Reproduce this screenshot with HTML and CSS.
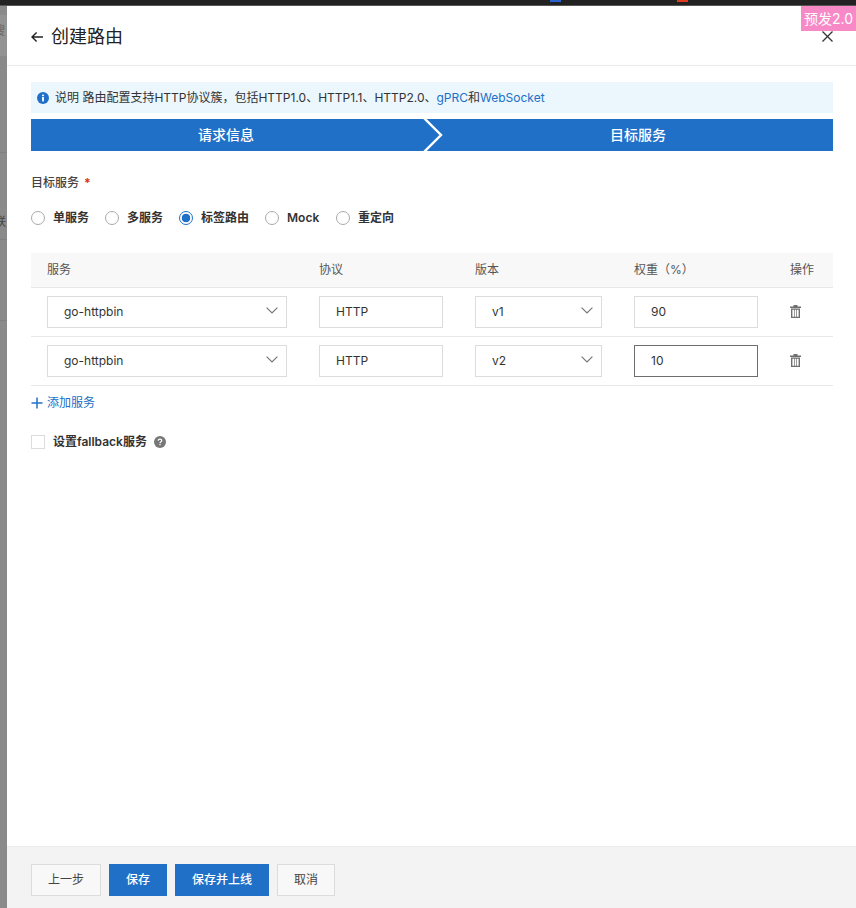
FILE: index.html
```html
<!DOCTYPE html>
<html lang="zh">
<head>
<meta charset="utf-8">
<title>创建路由</title>
<link rel="stylesheet" href="styles.css">
</head>
<body>
<div class="topbar"><span class="tab-blue"></span><span class="tab-red"></span></div>
<div class="stage">
  <aside class="backdrop">
    <span class="band"></span>
    <span class="frag frag-a">搜</span>
    <span class="frag frag-b">联</span>
    <span class="bg-line line-a"></span>
    <span class="bg-line line-b"></span>
    <span class="bg-line line-c"></span>
  </aside>
  <main class="drawer">
    <div class="badge">预发2.0</div>
    <header class="head">
      <div class="head-title">
        <svg class="back" width="12" height="12" viewBox="0 0 12 12"><path d="M5.6 1.400 1 6l4.600 4.600M1 6h11" fill="none" stroke="#222" stroke-width="1.400"/></svg>
        <h1>创建路由</h1>
      </div>
      <svg class="close" width="11" height="11" viewBox="0 0 11 11"><path d="M.5.5l10 10M10.500.5l-10 10" fill="none" stroke="#333" stroke-width="1.300"/></svg>
    </header>
    <div class="body">
      <div class="alert">
        <svg width="12" height="12" viewBox="0 0 12 12"><circle cx="6" cy="6" r="6" fill="#2070c8"/><rect x="5.100" y="5" width="1.800" height="4.400" fill="#fff"/><rect x="5.100" y="2.600" width="1.800" height="1.600" fill="#fff"/></svg>
        <span>说明 路由配置支持HTTP协议簇，包括HTTP1.0、HTTP1.1、HTTP2.0、<a href="#">gPRC</a>和<a href="#">WebSocket</a></span>
      </div>
      <div class="steps">
        <div class="step">请求信息</div>
        <div class="step">目标服务</div>
        <svg class="chevron" width="22" height="32" viewBox="0 0 22 32"><path d="M2 -1 19 16 2 33" fill="none" stroke="#fff" stroke-width="2.400"/></svg>
      </div>
      <div class="label">目标服务<span class="req">*</span></div>
      <div class="radios">
        <label class="radio"><i class="dot"></i>单服务</label>
        <label class="radio"><i class="dot"></i>多服务</label>
        <label class="radio"><i class="dot on"></i>标签路由</label>
        <label class="radio mock"><i class="dot"></i>Mock</label>
        <label class="radio"><i class="dot"></i>重定向</label>
      </div>
      <div class="table">
        <div class="tr th"><div>服务</div><div>协议</div><div>版本</div><div>权重（%）</div><div>操作</div></div>
        <div class="tr">
          <div class="field select">go-httpbin<svg class="caret" width="12" height="7" viewBox="0 0 12 7"><path d="M.6.600 6 6 11.400.600" fill="none" stroke="#777" stroke-width="1.200"/></svg></div>
          <div class="field">HTTP</div>
          <div class="field select">v1<svg class="caret" width="12" height="7" viewBox="0 0 12 7"><path d="M.6.600 6 6 11.400.600" fill="none" stroke="#777" stroke-width="1.200"/></svg></div>
          <div class="field">90</div>
          <svg class="trash" width="11" height="13" viewBox="0 0 11 13"><path d="M3.500 0h4v1.500H11V3H0V1.500h3.500z" fill="#6f6f6f"/><path fill-rule="evenodd" d="M1 3.500h9V13H1zM2.400 4.800v6.900h1.600V4.800zM4.700 4.800v6.900h1.600V4.800zM7 4.800v6.900h1.600V4.800z" fill="#6f6f6f"/></svg>
        </div>
        <div class="tr">
          <div class="field select">go-httpbin<svg class="caret" width="12" height="7" viewBox="0 0 12 7"><path d="M.6.600 6 6 11.400.600" fill="none" stroke="#777" stroke-width="1.200"/></svg></div>
          <div class="field">HTTP</div>
          <div class="field select">v2<svg class="caret" width="12" height="7" viewBox="0 0 12 7"><path d="M.6.600 6 6 11.400.600" fill="none" stroke="#777" stroke-width="1.200"/></svg></div>
          <div class="field focus">10</div>
          <svg class="trash" width="11" height="13" viewBox="0 0 11 13"><path d="M3.500 0h4v1.500H11V3H0V1.500h3.500z" fill="#6f6f6f"/><path fill-rule="evenodd" d="M1 3.500h9V13H1zM2.400 4.800v6.900h1.600V4.800zM4.700 4.800v6.900h1.600V4.800zM7 4.800v6.900h1.600V4.800z" fill="#6f6f6f"/></svg>
        </div>
      </div>
      <a class="add" href="#"><svg width="12" height="12" viewBox="0 0 12 12"><path d="M6 .5v11M.5 6h11" stroke="#2070c8" stroke-width="1.500"/></svg>添加服务</a>
      <div class="fallback">
        <i class="check"></i><span>设置fallback服务</span>
        <svg class="help" width="12" height="12" viewBox="0 0 12 12"><circle cx="6" cy="6" r="6" fill="#777"/><path d="M4.300 4.700C4.300 3.700 5 3.100 6 3.100s1.800.6 1.800 1.500C7.800 5.800 6 5.800 6 7.200" fill="none" stroke="#fff" stroke-width="1.200"/><rect x="5.400" y="8" width="1.200" height="1.200" fill="#fff"/></svg>
      </div>
    </div>
    <footer class="foot">
      <button class="btn">上一步</button>
      <button class="btn primary">保存</button>
      <button class="btn primary">保存并上线</button>
      <button class="btn">取消</button>
    </footer>
  </main>
</div>
</body>
</html>
```
FILE: styles.css
```css
* { box-sizing: border-box; }
html, body { margin: 0; height: 100%; }
body {
  display: flex;
  flex-direction: column;
  width: 856px;
  height: 908px;
  overflow: hidden;
  font: 12px/18px Inter, "Noto Sans CJK SC", sans-serif;
  color: #333;
  background: #fff;
}
.topbar {
  flex: 0 0 6px;
  position: relative;
  background: #222;
  border-bottom: 1px solid #555;
}
.tab-blue, .tab-red {
  position: absolute;
  top: 0;
  width: 11px;
  height: 2px;
}
.tab-blue { left: 550px; background: #2a62d0; }
.tab-red { left: 677px; background: #e03a1e; }
.stage { flex: 1; display: flex; min-height: 0; }
.backdrop {
  flex: 0 0 7px;
  position: relative;
  overflow: hidden;
  background: #8a8a8a;
}
.band { position: absolute; left: 0; right: 0; top: 9px; height: 41px; background: #939393; }
.frag { position: absolute; left: 0; color: #6a6a6a; font-size: 12px; }
.frag-a { top: 16px; left: -7px; }
.frag-b { top: 207px; left: -6px; color: #444; }
.bg-line { position: absolute; left: 0; right: 0; height: 1px; background: #808080; }
.line-a { top: 146px; }
.line-b { top: 233px; }
.line-c { top: 314px; }
.drawer {
  flex: 1;
  position: relative;
  display: flex;
  flex-direction: column;
  min-width: 0;
  background: #fff;
}
.badge {
  position: absolute;
  top: 0;
  right: 0;
  width: 55px;
  height: 25px;
  background: #f78ac6;
  color: #fff;
  font-size: 14px;
  line-height: 25px;
  text-align: center;
}
.head {
  flex: 0 0 60px;
  display: flex;
  align-items: center;
  justify-content: space-between;
  padding: 2px 23px 0 24px;
  border-bottom: 1px solid #ebebeb;
}
.head-title { display: flex; align-items: center; gap: 8px; }
.head h1 { margin: 0; font-size: 18px; line-height: 26px; font-weight: 400; color: #222; }
.body { flex: 1; display: flex; flex-direction: column; padding: 16px 23px 0 24px; }
.alert {
  display: flex;
  align-items: center;
  gap: 6px;
  height: 31px;
  padding: 0 6px;
  background: #ebf6fd;
  color: #333;
}
.alert a, .add { color: #2070c8; text-decoration: none; }
.steps {
  position: relative;
  display: flex;
  justify-content: space-between;
  margin-top: 6px;
  height: 32px;
  background: #2070c8;
  overflow: hidden;
}
.step {
  width: 390px;
  color: #fff;
  font-size: 14px;
  font-weight: 500;
  line-height: 32px;
  text-align: center;
}
.chevron { position: absolute; left: 391px; top: 0; }
.label { margin-top: 23px; color: #444; font-weight: 500; }
.req { margin-left: 5px; color: #d93026; font-weight: 700; }
.radios { display: flex; gap: 16px; margin-top: 17px; }
.radio {
  display: flex;
  align-items: center;
  gap: 8px;
  font-weight: 600;
  color: #333;
}
.radio.mock { min-width: 55px; }
.dot {
  width: 14px;
  height: 14px;
  border: 1px solid #aaa;
  border-radius: 50%;
  background: #fff;
}
.dot.on { border-color: #2070c8; background: radial-gradient(circle, #2070c8 0 4px, #fff 4.6px); }
.table { margin-top: 26px; }
.tr {
  display: grid;
  grid-template-columns: 240px 124px 127px 124px 1fr;
  column-gap: 32px;
  align-items: center;
  height: 49px;
  padding: 0 16px;
  border-bottom: 1px solid #e8e8e8;
}
.tr.th { height: 35px; background: #f8f8f8; color: #555; }
.field {
  position: relative;
  height: 32px;
  padding: 0 16px;
  border: 1px solid #dcdcdc;
  line-height: 30px;
  color: #333;
}
.field.focus { border-color: #6e6e6e; }
.caret { position: absolute; right: 8px; top: 10px; }
.trash { margin-top: -2px; }
.add { display: flex; align-items: center; gap: 4px; margin-top: 8px; }
.fallback {
  display: flex;
  align-items: center;
  gap: 8px;
  margin-top: 21px;
  font-weight: 600;
  color: #333;
}
.check { width: 14px; height: 14px; border: 1px solid #dcdcdc; background: #fff; }
.help { margin-left: -1px; }
.foot {
  flex: 0 0 62px;
  display: flex;
  gap: 8px;
  padding: 17px 24px 0;
  background: #f3f3f3;
  border-top: 1px solid #ebebeb;
}
.btn {
  height: 32px;
  padding: 0 16px;
  border: 1px solid #dcdcdc;
  background: #f8f8f8;
  color: #444;
  font: inherit;
}
.btn.primary { border-color: #2070c8; background: #2070c8; color: #fff; font-weight: 500; }
```
